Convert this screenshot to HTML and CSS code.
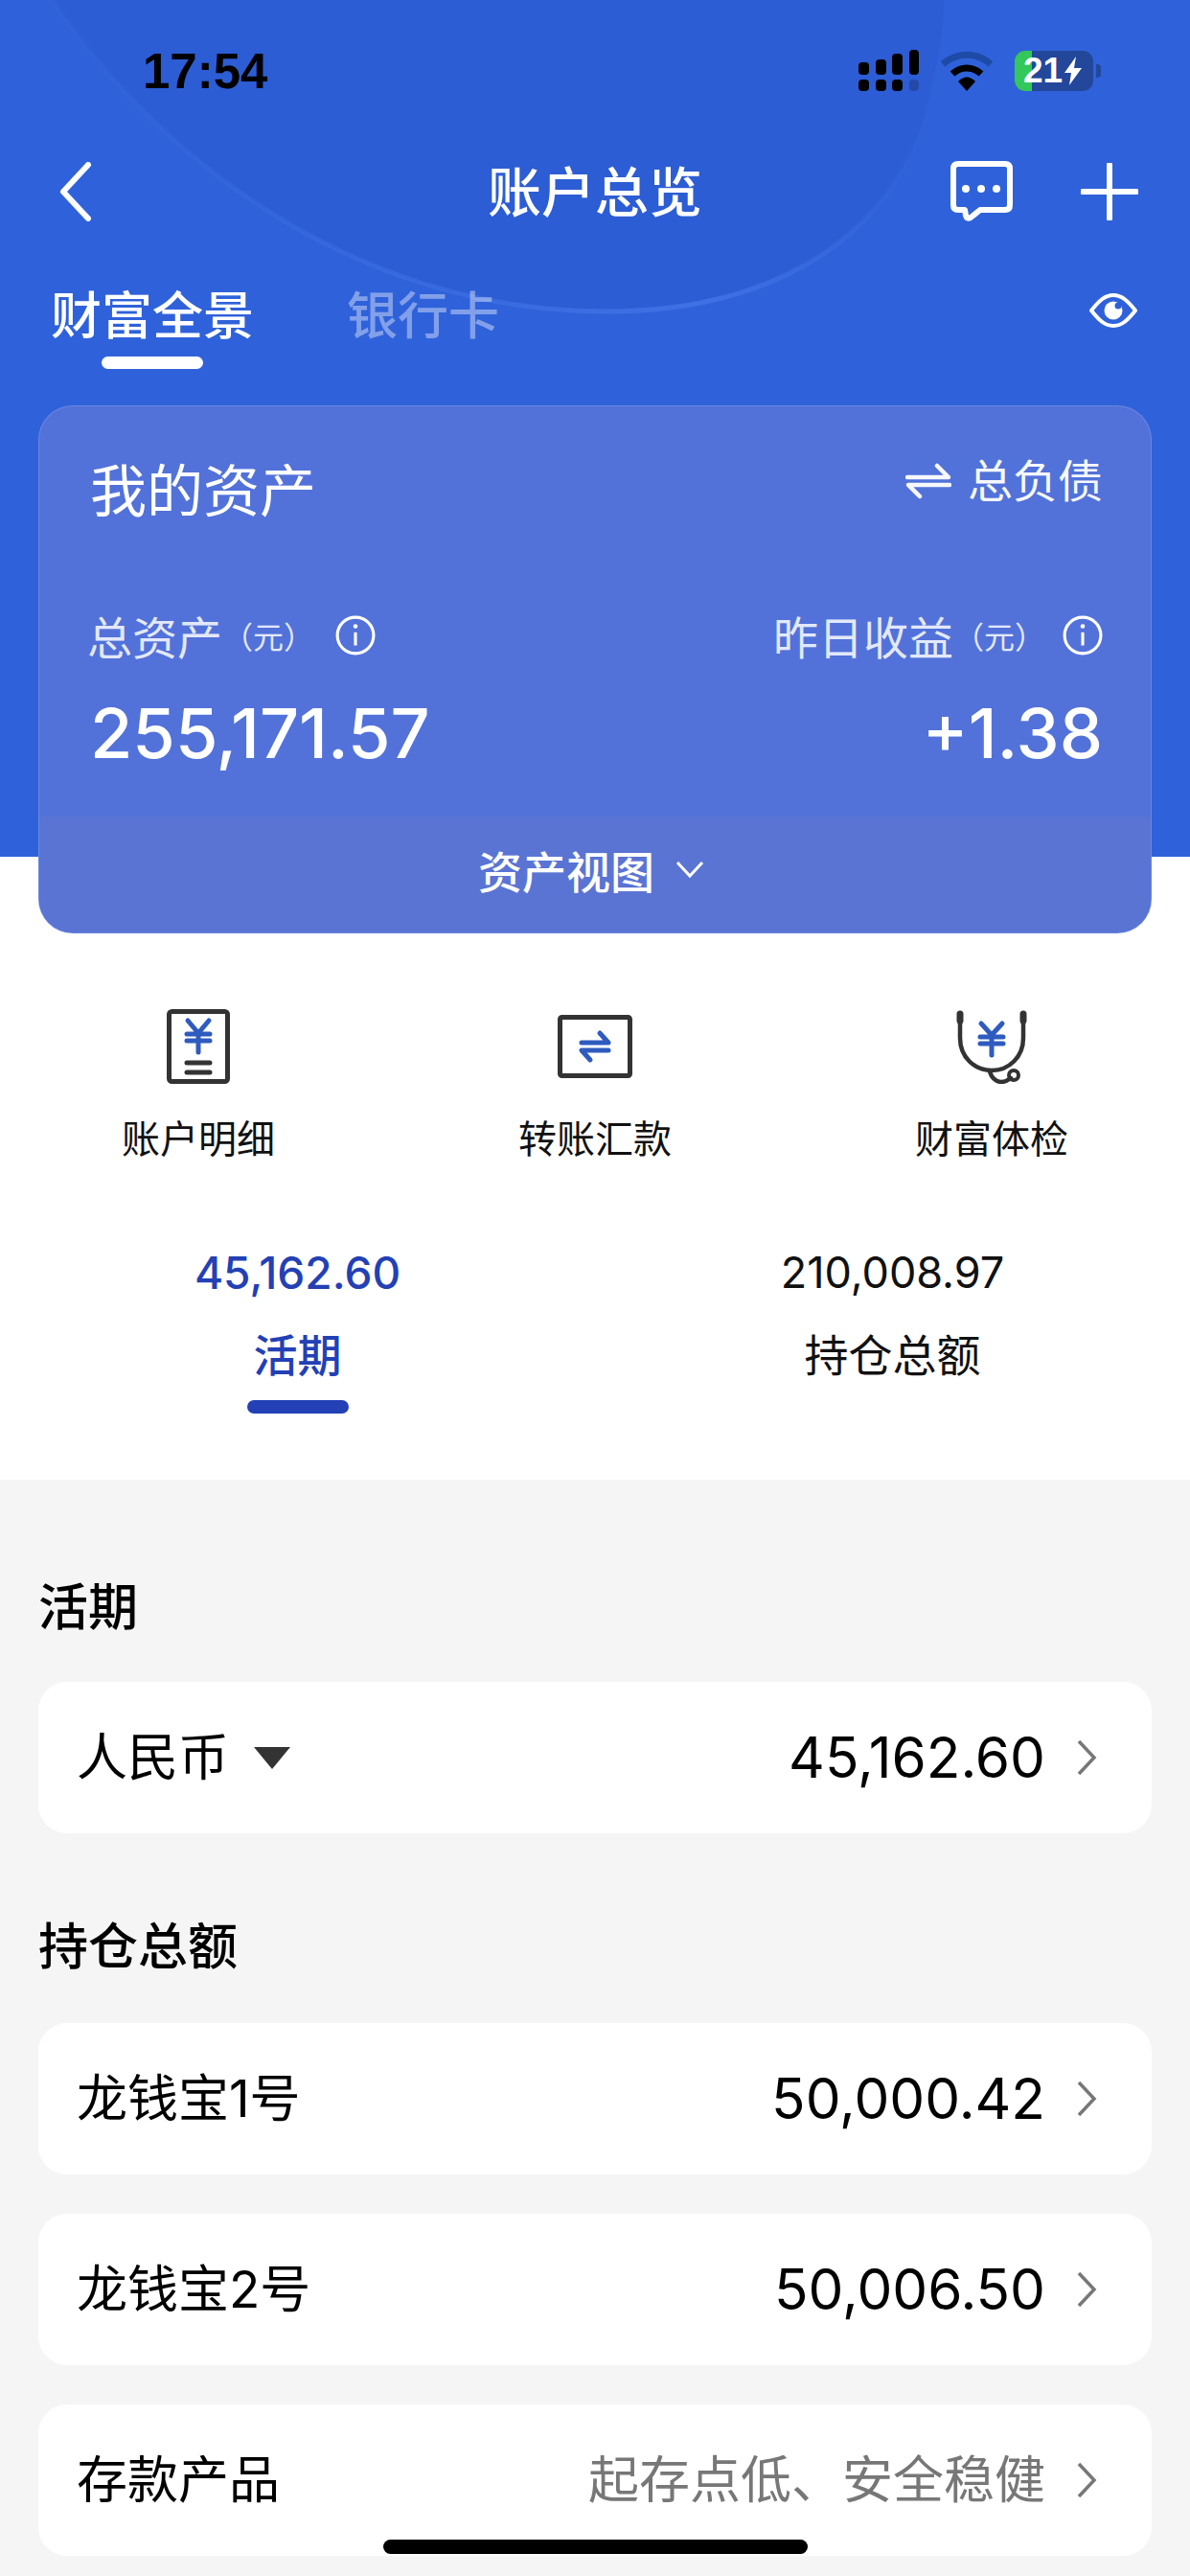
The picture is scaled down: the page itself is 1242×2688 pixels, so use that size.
FILE: index.html
```html
<!DOCTYPE html>
<html lang="zh-CN">
<head>
    <meta charset="UTF-8">
    <title>账户总览</title>
    <link rel="stylesheet" href="styles.css">
</head>
<body>
<div class="page">
    <div class="top">
        <svg class="hero-arc" width="1242" height="420" viewBox="0 0 1242 420">
            <defs>
                <linearGradient id="arcEdge" x1="0" y1="0" x2="1" y2="0">
                    <stop offset="0" stop-color="#3a6ce2" stop-opacity="0.15"/>
                    <stop offset="0.75" stop-color="#3f70e4"/>
                    <stop offset="1" stop-color="#3f70e4" stop-opacity="0"/>
                </linearGradient>
            </defs>
            <path d="M55 0C140 130 340 325 634 325C790 325 925 260 965 120C975 80 985 40 985 0Z" fill="#2c5dd4"/>
            <path d="M55 0C140 130 340 325 634 325C790 325 925 260 965 120" fill="none" stroke="url(#arcEdge)" stroke-width="5"/>
        </svg>

        <div class="status-bar">
            <div class="clock">17:54</div>
            <div class="status-icons">
                <svg width="64" height="44" viewBox="0 0 64 44">
                    <rect x="1" y="13" width="11" height="13" rx="4"/>
                    <rect x="19" y="10" width="11" height="16" rx="4"/>
                    <rect x="36" y="4" width="11" height="22" rx="4"/>
                    <rect x="54" y="0" width="10" height="26" rx="4"/>
                    <rect x="1" y="31" width="11" height="12" rx="4"/>
                    <rect x="19" y="31" width="11" height="12" rx="4"/>
                    <rect x="36" y="31" width="11" height="12" rx="4"/>
                    <rect x="54" y="31" width="10" height="12" rx="4" opacity="0.2"/>
                </svg>
                <svg width="56" height="42" viewBox="0 0 56 42">
                    <path d="M3 14C18 1 38 1 53 14" fill="none" stroke="#1f4ba8" stroke-width="7"/>
                    <path d="M13 24C22 16 34 16 43 24" fill="none" stroke="#000" stroke-width="7"/>
                    <path d="M19 32C25 26 31 26 37 32L28 42Z"/>
                </svg>
                <div class="battery">
                    <div class="battery-level"></div>
                    <span class="battery-text">21</span>
                    <svg class="battery-bolt" width="20" height="30" viewBox="0 0 20 30">
                        <path d="M13 0L1 17H8L6 30L19 12H11Z" fill="#fff"/>
                    </svg>
                </div>
                <div class="battery-nub"></div>
            </div>
        </div>

        <div class="nav-bar">
            <svg width="36" height="62" viewBox="0 0 36 62">
                <path d="M31 3L5 31L31 59" fill="none" stroke="#fff" stroke-width="6" stroke-linecap="round" stroke-linejoin="round"/>
            </svg>
            <div class="nav-title">账户总览</div>
            <div class="nav-actions">
                <svg width="68" height="66" viewBox="0 0 68 66">
                    <path d="M9 4H58Q63 4 63 9V47Q63 52 58 52H32L22 60Q18 62 17 58L16 52H9Q4 52 4 47V9Q4 4 9 4Z" fill="none" stroke="#fff" stroke-width="6" stroke-linejoin="round"/>
                    <circle cx="17" cy="30" r="4" fill="#fff"/>
                    <circle cx="33" cy="30" r="4" fill="#fff"/>
                    <circle cx="49" cy="30" r="4" fill="#fff"/>
                </svg>
                <svg width="60" height="60" viewBox="0 0 60 60">
                    <path d="M30 2V58M2 30H58" fill="none" stroke="#fff" stroke-width="6" stroke-linecap="round"/>
                </svg>
            </div>
        </div>

        <div class="tabs">
            <div class="tab tab-active">财富全景</div>
            <div class="tab tab-muted">银行卡</div>
            <svg class="eye" width="50" height="38" viewBox="0 0 50 38">
                <path d="M2 19C10 9 16 3 25 3C34 3 40 9 48 19C40 29 34 35 25 35C16 35 10 29 2 19Z" fill="none" stroke="#fff" stroke-width="4" stroke-linejoin="round"/>
                <circle cx="25" cy="19" r="9.5" fill="#fff"/>
                <circle cx="30" cy="14" r="3.5" fill="#2c5fd6"/>
            </svg>
        </div>

        <div class="asset-card">
            <div class="card-body">
                <div class="card-head">
                    <div class="card-title">我的资产</div>
                    <div class="switch">
                        <svg width="48" height="38" viewBox="0 0 48 38">
                            <path d="M2 15H45L33 3M46 23H3L15 35" fill="none" stroke="#fff" stroke-width="4.5" stroke-linecap="round" stroke-linejoin="round"/>
                        </svg>
                        <span>总负债</span>
                    </div>
                </div>
                <div class="card-stats">
                    <div class="stat">
                        <div class="stat-label stat-label-left">
                            <span>总资产</span><span class="unit">（元）</span>
                            <svg class="info" width="42" height="42" viewBox="0 0 40 40">
                                <circle cx="20" cy="20" r="18" fill="none" stroke="#fff" stroke-width="3"/>
                                <path d="M20 17V30" stroke="#fff" stroke-width="3"/>
                                <circle cx="20" cy="11" r="2.2" fill="#fff"/>
                            </svg>
                        </div>
                        <div class="stat-value">255,171.57</div>
                    </div>
                    <div class="stat stat-right">
                        <div class="stat-label">
                            <span>昨日收益</span><span class="unit">（元）</span>
                            <svg class="info" width="42" height="42" viewBox="0 0 40 40">
                                <circle cx="20" cy="20" r="18" fill="none" stroke="#fff" stroke-width="3"/>
                                <path d="M20 17V30" stroke="#fff" stroke-width="3"/>
                                <circle cx="20" cy="11" r="2.2" fill="#fff"/>
                            </svg>
                        </div>
                        <div class="stat-value">+1.38</div>
                    </div>
                </div>
            </div>
            <div class="card-foot">
                <span>资产视图</span>
                <svg width="30" height="20" viewBox="0 0 30 20">
                    <path d="M2 3L15 17L28 3" fill="none" stroke="#fff" stroke-width="3"/>
                </svg>
            </div>
        </div>

        <div class="shortcuts">
            <div class="shortcut">
                <svg width="66" height="78" viewBox="0 0 66 78">
                    <rect x="2.5" y="2.5" width="61" height="73" rx="3" fill="none" stroke="#333" stroke-width="5"/>
                    <path d="M22 12L33 25L44 12M33 25V45M21 26H45M21 33H45" fill="none" stroke="#2f5bbf" stroke-width="5" stroke-linecap="round"/>
                    <path d="M21 56H45M21 66H45" stroke="#333" stroke-width="5" stroke-linecap="round"/>
                </svg>
                <div class="shortcut-label">账户明细</div>
            </div>
            <div class="shortcut">
                <svg width="78" height="78" viewBox="0 -6 78 78">
                    <rect x="2.5" y="2.5" width="73" height="61" rx="2" fill="none" stroke="#333" stroke-width="5"/>
                    <path d="M25 29H53L44 19M53 37H25L34 47" fill="none" stroke="#2f5bbf" stroke-width="5" stroke-linecap="round" stroke-linejoin="round"/>
                </svg>
                <div class="shortcut-label">转账汇款</div>
            </div>
            <div class="shortcut">
                <svg width="80" height="78" viewBox="0 0 80 78">
                    <path d="M7 5V30C7 50 22 64 40 64C58 64 73 50 73 30V5" fill="none" stroke="#333" stroke-width="4.5" stroke-linecap="round"/>
                    <path d="M7 5V12M73 5V12" fill="none" stroke="#333" stroke-width="7" stroke-linecap="round"/>
                    <path d="M38 65C40 73 46 76 50 76C56 76 58 73 60 72" fill="none" stroke="#333" stroke-width="4.5" stroke-linecap="round"/>
                    <circle cx="63" cy="69" r="5" fill="none" stroke="#333" stroke-width="4"/>
                    <path d="M29 15L40 27L51 15M40 27V48M28 29H52M28 36H52" fill="none" stroke="#2f5bbf" stroke-width="5" stroke-linecap="round"/>
                </svg>
                <div class="shortcut-label">财富体检</div>
            </div>
        </div>

        <div class="balance-tabs">
            <div class="balance-tab balance-tab-active">
                <div class="balance-num">45,162.60</div>
                <div class="balance-name">活期</div>
                <div class="balance-line"></div>
            </div>
            <div class="balance-tab">
                <div class="balance-num">210,008.97</div>
                <div class="balance-name">持仓总额</div>
            </div>
        </div>
    </div>

    <div class="lists">
        <div class="section-title first">活期</div>
        <div class="row">
            <div class="row-name">人民币<span class="caret"></span></div>
            <div class="row-value">45,162.60</div>
            <svg class="chevron" width="22" height="40" viewBox="0 0 22 40"><path d="M3 3L19 20L3 37" fill="none" stroke="#777" stroke-width="3.5"/></svg>
        </div>

        <div class="section-title">持仓总额</div>
        <div class="row">
            <div class="row-name">龙钱宝1号</div>
            <div class="row-value">50,000.42</div>
            <svg class="chevron" width="22" height="40" viewBox="0 0 22 40"><path d="M3 3L19 20L3 37" fill="none" stroke="#777" stroke-width="3.5"/></svg>
        </div>
        <div class="row">
            <div class="row-name">龙钱宝2号</div>
            <div class="row-value">50,006.50</div>
            <svg class="chevron" width="22" height="40" viewBox="0 0 22 40"><path d="M3 3L19 20L3 37" fill="none" stroke="#777" stroke-width="3.5"/></svg>
        </div>
        <div class="row">
            <div class="row-name">存款产品</div>
            <div class="row-note">起存点低、安全稳健</div>
            <svg class="chevron" width="22" height="40" viewBox="0 0 22 40"><path d="M3 3L19 20L3 37" fill="none" stroke="#777" stroke-width="3.5"/></svg>
        </div>
    </div>

    <div class="home-bar"></div>
</div>
</body>
</html>
```

FILE: styles.css
```css
* {
    box-sizing: border-box;
}
html, body {
    margin: 0;
    padding: 0;
}
body {
    font-family: "Inter", "Noto Sans CJK SC", sans-serif;
    color: #000;
}
.page {
    position: relative;
    width: 1242px;
    height: 2688px;
    overflow: hidden;
    background-color: #f5f5f5;
}
.top {
    position: relative;
    height: 1544px;
    background: linear-gradient(#2f62da 0, #2f62da 894px, #fff 894px);
}
.hero-arc {
    position: absolute;
    top: 0;
    left: 0;
}

/* status bar */
.status-bar {
    position: relative;
    display: flex;
    justify-content: space-between;
    align-items: center;
    height: 148px;
    padding: 0 93px 0 149px;
}
.clock {
    font-family: "Liberation Sans", sans-serif;
    font-size: 51px;
    font-weight: 700;
}
.status-icons {
    display: flex;
    align-items: center;
}
.status-icons svg + svg {
    margin-left: 22px;
}
.battery {
    position: relative;
    display: flex;
    align-items: center;
    gap: 1px;
    width: 82px;
    height: 42px;
    margin-left: 22px;
    padding-left: 9px;
    border-radius: 11px;
    background-color: #22479b;
    overflow: hidden;
}
.battery-level {
    position: absolute;
    top: 0;
    left: 0;
    width: 18px;
    height: 42px;
    background-color: #34c759;
}
.battery-text {
    position: relative;
    font-family: "Liberation Sans", sans-serif;
    font-size: 37px;
    font-weight: 700;
    color: #fff;
}
.battery-bolt {
    position: relative;
}
.battery-nub {
    width: 5px;
    height: 14px;
    margin-left: 3px;
    border-radius: 0 4px 4px 0;
    background-color: #22479b;
}

/* nav */
.nav-bar {
    position: relative;
    display: flex;
    justify-content: space-between;
    align-items: center;
    height: 104px;
    padding: 0 54px 0 61px;
}
.nav-title {
    position: absolute;
    left: 0;
    right: 0;
    top: 23px;
    text-align: center;
    line-height: 60px;
    font-size: 56px;
    font-weight: 500;
    color: #fff;
}
.nav-actions {
    display: flex;
    align-items: center;
    gap: 69px;
}

/* tabs */
.tabs {
    position: relative;
    display: flex;
    align-items: flex-start;
    height: 171px;
    padding: 0 55px 0 53px;
    gap: 97px;
}
.tab {
    position: relative;
    padding-top: 48px;
    font-size: 53px;
    line-height: 60px;
}
.tab-active {
    font-weight: 500;
    color: #fff;
}
.tab-active::after {
    content: "";
    position: absolute;
    left: 53px;
    bottom: -25px;
    width: 106px;
    height: 13px;
    border-radius: 7px;
    background-color: #fff;
}
.tab-muted {
    font-weight: 500;
    color: rgba(255, 255, 255, 0.4);
}
.eye {
    margin-left: auto;
    margin-top: 53px;
}

/* asset card */
.asset-card {
    position: relative;
    margin: 0 40px;
    height: 551px;
    border: 1px solid rgba(255, 255, 255, 0.15);
    border-radius: 36px;
    overflow: hidden;
    background-color: #5272da;
    color: #fff;
}
.card-body {
    height: 428px;
    padding: 46px 50px 0 53px;
}
.card-head {
    display: flex;
    justify-content: space-between;
    align-items: flex-start;
    height: 172px;
}
.card-title {
    padding-top: 3px;
    font-size: 59px;
    line-height: 80px;
}
.switch {
    display: flex;
    align-items: center;
    gap: 17px;
    font-size: 47px;
    line-height: 64px;
    opacity: 0.95;
}
.card-stats {
    display: flex;
    justify-content: space-between;
    margin-top: -6px;
}
.stat-label {
    display: flex;
    align-items: center;
    font-size: 47px;
    line-height: 60px;
    color: rgba(255, 255, 255, 0.85);
}
.stat-label-left {
    margin-left: -3px;
}
.stat-label-left .info {
    margin-left: 22px;
}
.stat-right {
    text-align: right;
}
.stat-right .stat-label {
    justify-content: flex-end;
}
.unit {
    font-size: 32px;
}
.info {
    margin-left: 18px;
    margin-top: -6px;
}
.stat-value {
    margin-top: 25px;
    font-size: 72px;
    line-height: 88px;
    font-weight: 500;
    color: #fff;
}
.card-foot {
    display: flex;
    justify-content: center;
    align-items: center;
    gap: 22px;
    height: 122px;
    padding: 0 8px 12px 0;
    font-size: 46px;
    font-weight: 500;
    background-color: #5a74d4;
}

/* shortcuts */
.shortcuts {
    display: grid;
    grid-template-columns: 414px 414px 414px;
    padding-top: 79px;
}
.shortcut {
    display: flex;
    flex-direction: column;
    align-items: center;
}
.shortcut-label {
    margin-top: 30px;
    font-size: 40px;
    line-height: 56px;
    color: #111;
}

/* balance tabs */
.balance-tabs {
    display: grid;
    grid-template-columns: 621px 621px;
    padding-top: 81px;
}
.balance-tab {
    display: flex;
    flex-direction: column;
    align-items: center;
}
.balance-num {
    font-size: 45px;
    line-height: 60px;
    color: #111;
}
.balance-name {
    margin-top: 26px;
    font-size: 46px;
    line-height: 60px;
    color: #111;
}
.balance-tab-active .balance-num {
    font-size: 46px;
    color: #2340b5;
    font-weight: 500;
}
.balance-tab-active .balance-name {
    color: #2340b5;
    font-weight: 500;
}
.balance-line {
    width: 106px;
    height: 14px;
    margin-top: 17px;
    border-radius: 7px;
    background-color: #2340b5;
}

/* lists */
.lists {
    display: flex;
    flex-direction: column;
    padding: 0 40px;
}
.section-title {
    height: 78px;
    padding-top: 4px;
    margin-top: 40px;
    margin-bottom: 39px;
    font-size: 52px;
    line-height: 68px;
    font-weight: 500;
}
.section-title.first {
    margin-top: 96px;
    margin-bottom: 37px;
}
.row {
    display: flex;
    align-items: center;
    flex-shrink: 0;
    height: 158px;
    margin-bottom: 41px;
    padding: 0 57px 0 40px;
    border-radius: 30px;
    background-color: #fff;
}
.row-name {
    display: flex;
    align-items: center;
    font-size: 53px;
    line-height: 60px;
}
.caret {
    width: 0;
    height: 0;
    margin-left: 26px;
    border-left: 19px solid transparent;
    border-right: 19px solid transparent;
    border-top: 23px solid #333;
}
.row-value {
    margin-left: auto;
    font-size: 58.5px;
    line-height: 60px;
}
.row-note {
    margin-left: auto;
    font-size: 53px;
    line-height: 60px;
    color: #777;
}
.chevron {
    margin-left: 32px;
}
.home-bar {
    position: absolute;
    left: 400px;
    top: 2650px;
    width: 443px;
    height: 15px;
    border-radius: 8px;
    background-color: #000;
}
```
